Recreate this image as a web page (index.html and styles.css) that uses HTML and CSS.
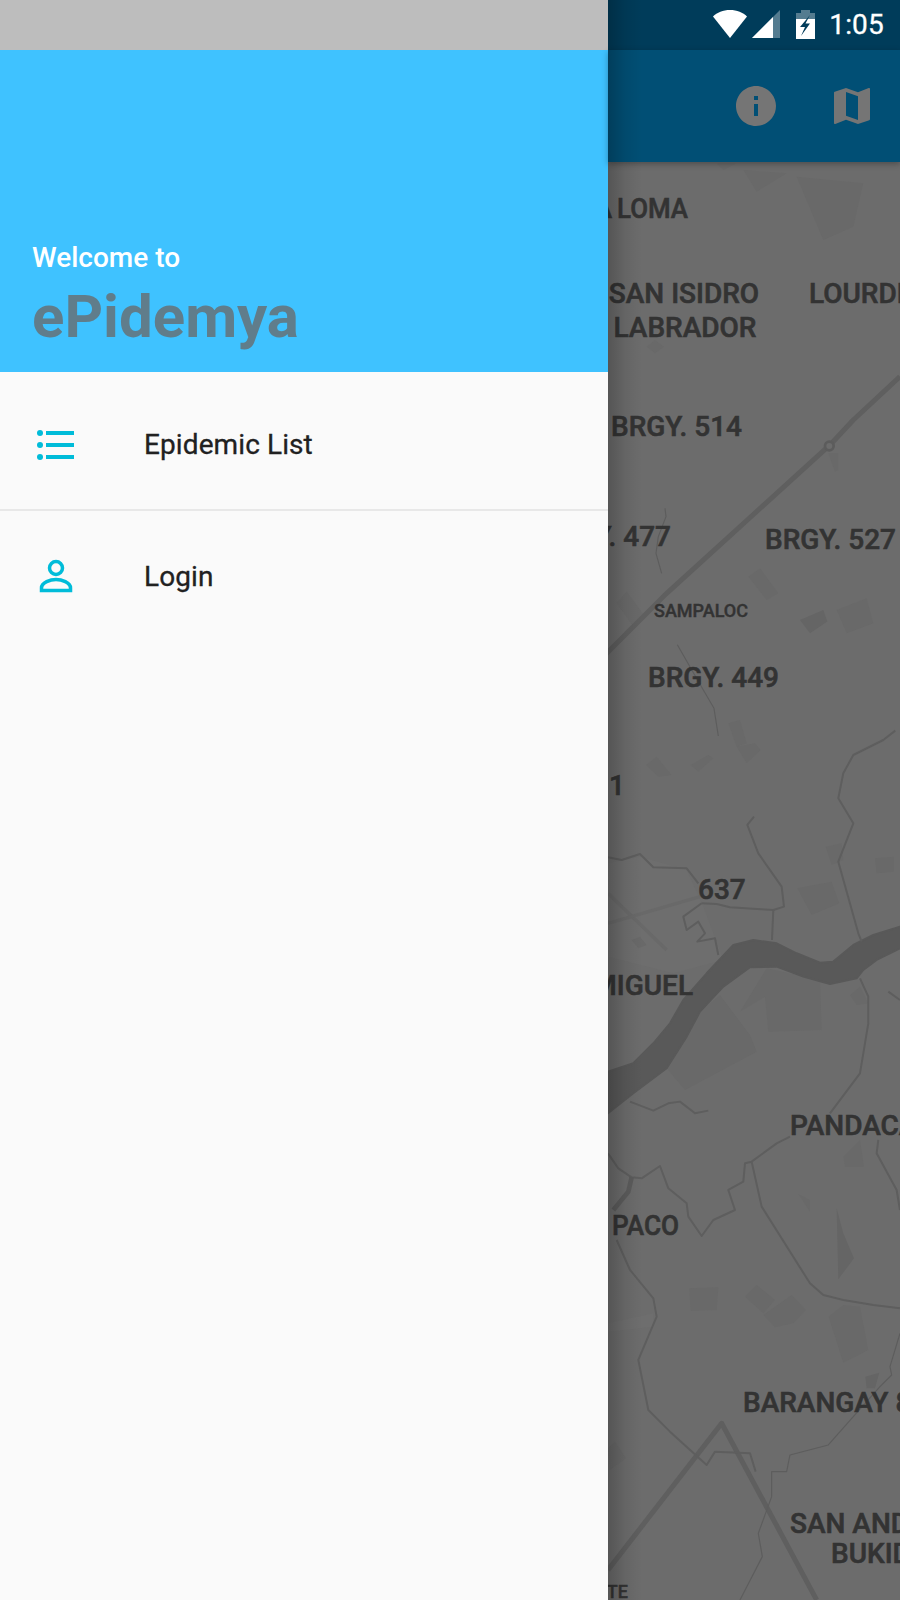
FILE: index.html
```html
<!DOCTYPE html>
<html>
<head>
  <meta charset="utf-8" />
  <title>ePidemya</title>
  <link rel="stylesheet" href="styles.css">
</head>
<body>

<div class="drawer">
  <div class="drawer-status"></div>
  <div class="drawer-header">
    <div class="welcome">Welcome to</div>
    <div class="brand">ePidemya</div>
  </div>
  <div class="item item-first">
    <svg class="item-icon" viewBox="0 0 48 48">
      <circle cx="8" cy="12" r="3"/><circle cx="8" cy="24" r="3"/><circle cx="8" cy="36" r="3"/>
      <rect x="14" y="10" width="28" height="4"/><rect x="14" y="22" width="28" height="4"/><rect x="14" y="34" width="28" height="4"/>
    </svg>
    <span class="item-label">Epidemic List</span>
  </div>
  <div class="item">
    <svg class="item-icon" viewBox="0 0 48 48">
      <circle class="outline" cx="24" cy="15" r="6.5"/>
      <path class="outline" d="M9.5 37.5v-2.5c0-5.5 9-8.500 14.500-8.500s14.500 3 14.500 8.500v2.500z"/>
    </svg>
    <span class="item-label">Login</span>
  </div>
</div>

<div class="main">
  <div class="statusbar">
    <svg class="st-wifi" viewBox="0 0 34 28"><path d="M0 6.500C4 2.500 10 0 17 0s13 2.500 17 6.500L17 28z"/></svg>
    <svg class="st-signal" viewBox="0 0 28 28">
      <path class="dim" d="M28 0v28H0z"/>
      <path d="M21 7v21H0z"/>
    </svg>
    <svg class="st-battery" viewBox="0 0 19 29">
      <path class="dim" d="M5 0h9v3h5v9H0V3h5z"/>
      <path d="M0 9h19v20H0z"/>
      <path class="bolt" d="M14 5 4 17h5l-4 9 9-12.500H9.500z"/>
    </svg>
    <span class="clock">1:05</span>
  </div>
  <div class="appbar">
    <svg class="bar-icon" viewBox="0 0 24 24"><path d="M12 2C6.480 2 2 6.480 2 12s4.480 10 10 10 10-4.480 10-10S17.520 2 12 2zm1 15h-2v-6h2v6zm0-8h-2V7h2v2z"/></svg>
    <svg class="bar-icon" viewBox="0 0 24 24"><path d="M20.500 3l-.16.03L15 5.100 9 3 3.360 4.900c-.21.07-.36.25-.36.48V20.500c0 .28.22.5.5.5l.16-.03L9 18.900l6 2.100 5.640-1.900c.21-.07.36-.25.36-.48V3.500c0-.28-.22-.5-.5-.5zM15 19l-6-2.110V5l6 2.110V19z"/></svg>
  </div>
  <div class="map">
    <!-- viewBox uses page coordinates, the groups are traced at 3x -->
    <svg class="map-svg" viewBox="608 162 292 1438">
      <g class="soft" transform="translate(590 160) scale(.3333)">
        <polygon class="block" points="620,50 820,70 790,200 700,240"/>
        <polygon class="block" points="460,30 590,40 500,95"/>
        <polygon class="block" points="380,10 440,10 400,30"/>
        <polygon class="block" points="170,560 195,540 222,560 195,580"/>
        <polygon class="block" points="715,880 745,880 745,930 735,935"/>
        <polygon class="block" points="475,1250 510,1225 565,1300 530,1320"/>
        <polygon class="block" points="80,1330 110,1295 165,1370 130,1400"/>
        <polygon class="block2" points="630,1380 700,1350 712,1385 660,1420"/>
        <polygon class="block" points="740,1350 830,1315 850,1390 770,1420"/>
        <polyline class="road" points="930,650 790,780 720,855 230,1300 40,1490"/>
        <circle class="ring" cx="718" cy="858" r="13"/>
        <polyline class="thin" points="225,1045 228,1070 205,1130 198,1180 215,1240"/>
      </g>
      <g class="soft" transform="translate(590 640) scale(.3333)">
        <polygon class="light" points="54,670 150,650 290,690 340,800 400,960 250,1000 54,950"/>
        <polyline class="road-faint" points="54,760 230,930"/>
        <polyline class="road-faint" points="54,850 330,770"/>
        <polygon class="block" points="415,250 450,240 470,310 440,320"/>
        <polygon class="block" points="440,320 495,310 512,330 470,370"/>
        <polygon class="block" points="168,375 200,350 245,405 205,410"/>
        <polygon class="block" points="302,375 355,345 370,355 325,395"/>
        <polygon class="block" points="707,620 755,610 760,660 725,675"/>
        <polygon class="block" points="855,655 912,650 912,695 860,700"/>
        <polygon class="block" points="622,745 725,725 748,790 665,825"/>
        <polygon class="block" points="125,900 150,890 170,915 145,925"/>
        <polygon class="block" points="330,1115 390,1065 480,1185 500,1235 285,1350 230,1285 290,1190"/>
        <polygon class="block" points="530,985 690,1020 695,1170 535,1175 525,1070 450,1115"/>
        <polygon class="block" points="780,1065 810,1040 835,1090 800,1095"/>
        <polygon class="river" points="54,1295 130,1270 190,1210 240,1150 280,1080 350,1000 430,915 490,900 560,910 620,940 690,968 730,965 790,915 850,885 930,860 930,925 860,960 820,990 800,1015 720,1032 640,1010 560,980 480,982 400,1040 330,1115 290,1190 230,1285 130,1360 54,1420"/>
        <polyline class="stream" points="54,652 95,660 150,642 190,682 290,685 325,730"/>
        <polyline class="stream" points="335,790 280,830 290,870 325,845 345,880 322,905 375,895 385,945"/>
        <polyline class="stream" points="335,790 380,792 420,802 550,810 582,800 575,740 505,640 472,555 492,530"/>
        <polyline class="stream" points="550,810 546,900"/>
        <polyline class="stream" points="916,272 880,300 790,345 760,400 745,475 790,550 745,665 805,880 815,905"/>
        <polyline class="stream" points="810,1015 835,1070 835,1150 810,1300 720,1420"/>
        <polyline class="stream" points="120,1385 190,1412 235,1390 270,1385 315,1420 355,1412"/>
        <polyline class="thin" points="262,14 340,150 372,205 385,288"/>
        <polyline class="stream" points="895,1055 930,1080"/>
      </g>
      <g class="soft" transform="translate(590 1120) scale(.3333)">
        <polygon class="light" points="54,610 190,580 190,620 54,635"/>
        <polygon class="block" points="298,505 385,502 380,570 302,573"/>
        <polygon class="block" points="465,530 500,495 555,540 520,580"/>
        <polygon class="block" points="520,585 605,525 648,570 610,610 555,622"/>
        <polygon class="block" points="716,590 760,555 810,560 835,690 760,728"/>
        <polygon class="block2" points="740,265 760,340 792,415 745,478"/>
        <polygon class="block" points="760,110 810,60 822,140 765,140"/>
        <polygon class="block" points="625,222 660,240 660,275"/>
        <polygon class="block2" points="826,770 868,758 855,805 830,805"/>
        <polygon class="block" points="54,985 75,965 108,1015 60,1050"/>
        <polyline class="road" points="54,1350 395,910 680,1440"/>
        <polyline class="stream" points="54,100 85,145 125,172 155,175 210,138 235,205 290,250 295,290 335,348 370,300 435,270 415,210 460,185 465,130 485,125 560,70 600,50"/>
        <polyline class="stream-wide" points="125,172 115,215 70,270"/>
        <polyline class="stream" points="80,360 120,450 190,535 200,590 145,720 175,870 240,935 350,1035 375,995 480,1000 497,1055"/>
        <polyline class="stream" points="485,125 515,260 660,490 700,525 760,540 850,555 930,565"/>
        <polyline class="stream" points="865,60 860,100 920,210 930,270"/>
        <polyline class="thin" points="930,640 900,740 905,765 870,800 790,890 715,975 600,1005 590,1055 545,1055 545,1130 505,1240 517,1310 450,1440"/>
      </g>
      <text class="lbl" x="612" y="218" text-anchor="end">LA</text>
      <text class="lbl" x="617" y="218" textLength="71" lengthAdjust="spacingAndGlyphs">LOMA</text>
      <text class="lbl" x="684" y="303" text-anchor="middle">SAN ISIDRO</text>
      <text class="lbl" x="685" y="337" text-anchor="middle">LABRADOR</text>
      <text class="lbl" x="809" y="303">LOURDES</text>
      <text class="lbl" x="611" y="436">BRGY. 514</text>
      <text class="lbl" x="671" y="546" text-anchor="end">BRGY. 477</text>
      <text class="lbl" x="765" y="549">BRGY. 527</text>
      <text class="lbl-small" x="654" y="617">SAMPALOC</text>
      <text class="lbl" x="648" y="687">BRGY. 449</text>
      <text class="lbl" x="625" y="795" text-anchor="end">1</text>
      <text class="lbl" x="698" y="899">637</text>
      <text class="lbl" x="693" y="995" text-anchor="end">SAN MIGUEL</text>
      <text class="lbl" x="790" y="1135">PANDACAN</text>
      <text class="lbl" x="612" y="1235" textLength="67" lengthAdjust="spacingAndGlyphs">PACO</text>
      <text class="lbl" x="743" y="1412">BARANGAY 8</text>
      <text class="lbl" x="790" y="1533">SAN ANDRES</text>
      <text class="lbl" x="831" y="1563">BUKID</text>
      <text class="lbl-small" x="628" y="1598" text-anchor="end">SITE</text>
    </svg>
  </div>
  <div class="drawer-shadow"></div>
</div>

</body>
</html>
```

FILE: styles.css
```css
html { height: 100%; }
body {
  margin: 0;
  width: 900px;
  height: 1600px;
  display: flex;
  overflow: hidden;
  font-family: Roboto, sans-serif;
  background: #6c6c6c;
}

/* drawer */
.drawer {
  width: 608px;
  flex: none;
  background: #fafafa;
  color: #212121;
}
.drawer-status {
  height: 50px;
  background: #bdbdbd;
}
.drawer-header {
  height: 322px;
  box-sizing: border-box;
  padding: 0 32px 19px;
  background: #3fc2ff;
  display: flex;
  flex-direction: column;
  justify-content: flex-end;
}
.welcome {
  color: #fff;
  font-size: 28px;
  font-weight: 500;
  line-height: 40px;
  margin-bottom: 3px;
}
.brand {
  color: #607d8b;
  font-size: 60px;
  font-weight: 700;
  line-height: 72px;
}
.item {
  height: 134px;
  padding-left: 32px;
  display: flex;
  align-items: center;
  gap: 64px;
}
.item-first {
  height: 129px;
  padding-top: 8px;
  border-bottom: 2px solid #e8e8e8;
  margin-bottom: -1px;
}
.item-icon {
  width: 48px;
  height: 48px;
  fill: #00bcd9;
}
.item-icon .outline {
  fill: none;
  stroke: #00bcd9;
  stroke-width: 3.500;
}
.item-label {
  font-size: 28px;
  font-weight: 400;
  letter-spacing: .1px;
  -webkit-text-stroke: .3px #212121;
}
.item + .item .item-label {
  margin-bottom: 2px;
}

/* right part, dimmed by the scrim */
.main {
  flex: 1;
  position: relative;
  display: flex;
  flex-direction: column;
}
.statusbar {
  height: 50px;
  flex: none;
  background: #003c5a;
  display: flex;
  align-items: center;
  justify-content: flex-end;
  padding-right: 16px;
  color: #fff;
}
.statusbar svg { fill: #fff; display: block; }
.statusbar .dim { fill: #fff; opacity: .33; }
.st-wifi { width: 34px; height: 28px; margin: -3px 5px 0 0; }
.st-signal { width: 28px; height: 28px; margin: -3px 16px 0 0; }
.st-battery { width: 19px; height: 29px; margin: -1px 14px 0 0; }
.st-battery .bolt { fill: #003c5a; }
.clock {
  font-size: 28px;
  font-weight: 400;
  letter-spacing: .2px;
  line-height: 50px;
  margin-top: -1px;
  -webkit-text-stroke: .3px #fff;
}
.appbar {
  height: 112px;
  flex: none;
  background: #014f75;
  display: flex;
  align-items: center;
  justify-content: flex-end;
  gap: 48px;
  padding-right: 24px;
  box-shadow: 0 2px 6px rgba(0,0,0,.3);
  position: relative;
  z-index: 1;
}
.bar-icon {
  width: 48px;
  height: 48px;
  fill: #757575;
}
.map {
  flex: 1;
  overflow: hidden;
}
.map-svg {
  display: block;
  width: 292px;
  height: 1438px;
  fill: none;
}
.drawer-shadow {
  position: absolute;
  z-index: 2;
  left: 0;
  top: 0;
  bottom: 0;
  width: 34px;
  background: linear-gradient(to right, rgba(0,0,0,.22), rgba(0,0,0,.07) 50%, rgba(0,0,0,0));
}

/* map layers */
.soft { filter: blur(.7px); }
.block { fill: #696969; }
.block2 { fill: #656565; }
.light { fill: #6e6e6e; }
.river { fill: #595959; stroke: #595959; stroke-width: 6; stroke-linejoin: round; }
.road { fill: none; stroke: #5f5f5f; stroke-width: 15; stroke-linejoin: round; }
.road-faint { fill: none; stroke: #696969; stroke-width: 10; }
.ring { fill: #6c6c6c; stroke: #5c5c5c; stroke-width: 8; }
.stream { fill: none; stroke: #5e5e5e; stroke-width: 6; stroke-linejoin: round; }
.stream-wide { fill: none; stroke: #5c5c5c; stroke-width: 14; }
.thin { fill: none; stroke: #5d5d5d; stroke-width: 3.500; stroke-linejoin: round; }
.lbl {
  fill: #333;
  font-size: 28px;
  font-weight: 500;
  stroke: #333;
  stroke-width: .6px;
}
.lbl-small {
  fill: #333;
  font-size: 18px;
  font-weight: 500;
  stroke: #333;
  stroke-width: .4px;
}
```
